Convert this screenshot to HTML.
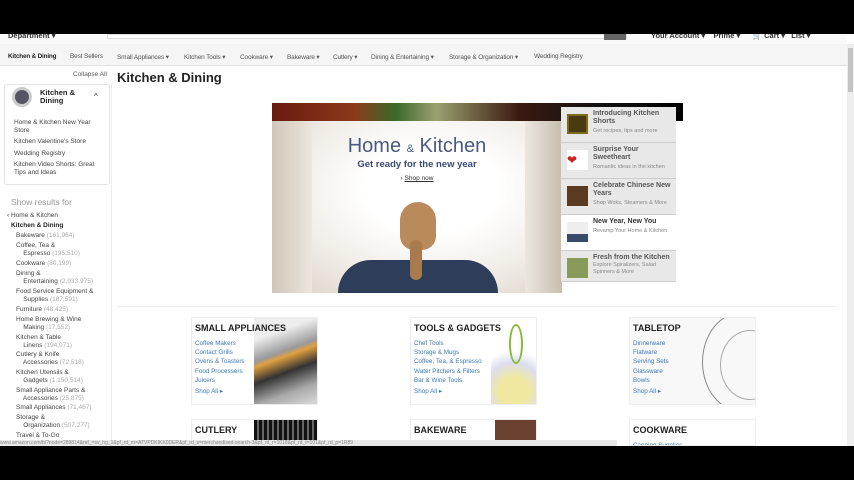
<!DOCTYPE html>
<html><head><meta charset="utf-8"><style>
*{margin:0;padding:0;box-sizing:border-box}
html,body{width:854px;height:480px;overflow:hidden}
body{background:#fff;font-family:"Liberation Sans",sans-serif;position:relative;color:#333}
.a{position:absolute}
.blk{background:#000}
.nav span{position:absolute;top:53px;font-size:6.5px;color:#555;white-space:nowrap;letter-spacing:-0.15px}
.side div{position:absolute;font-size:6.5px;color:#444;line-height:8px;white-space:nowrap}
.side .n{color:#aaa}
.card{position:absolute;width:127px;height:88px;border:1px solid #eee;background:#fff;overflow:hidden}
.card h3{position:absolute;left:3px;top:5px;font-size:9px;font-weight:bold;color:#222}
.card .l{position:absolute;left:3px;top:21px;font-size:6.3px;color:#3a7ab8;line-height:9.2px}
.card .s{position:absolute;left:3px;top:70px;font-size:6.3px;color:#3a7ab8}
.pn{position:absolute;left:561px;width:115px;height:36px;background:#e8e8e8;border-bottom:1px solid #ccc}
.pn .ic{position:absolute;left:6px;top:7px;width:21px;height:20px}
.pn b{position:absolute;left:32px;top:3px;font-size:7px;color:#555;line-height:7.5px;width:82px}
.pn i{position:absolute;left:32px;font-style:normal;font-size:5.5px;color:#888;line-height:6.5px;width:82px}
</style></head><body>
<div class="a" style="left:0;top:34px;width:847px;height:10px;background:#fafafa"></div>
<div class="a" style="left:8px;top:31px;font-size:7.5px;font-weight:bold;color:#333">Department ▾</div>
<div class="a" style="left:107px;top:34px;width:520px;height:5px;background:#fff;border:1px solid #ddd"></div>
<div class="a" style="left:604px;top:34px;width:22px;height:6px;background:#666"></div>
<div class="a" style="left:651px;top:31px;font-size:7.5px;font-weight:bold;color:#333;white-space:nowrap">Your Account ▾ &nbsp; &nbsp;Prime ▾ &nbsp; &nbsp; &nbsp;🛒 Cart ▾ &nbsp; List ▾</div>
<div class="a" style="left:0;top:44px;width:847px;height:22px;background:#f5f5f5;border-bottom:1px solid #e0e0e0"></div>
<div class="nav">
<span style="left:8px;color:#222;font-weight:bold;font-size:6.3px">Kitchen &amp; Dining</span>
<span style="left:70px">Best Sellers</span>
<span style="left:117px">Small Appliances ▾</span>
<span style="left:184px">Kitchen Tools ▾</span>
<span style="left:240px">Cookware ▾</span>
<span style="left:287px">Bakeware ▾</span>
<span style="left:333px">Cutlery ▾</span>
<span style="left:371px">Dining &amp; Entertaining ▾</span>
<span style="left:449px">Storage &amp; Organization ▾</span>
<span style="left:534px">Wedding Registry</span>
</div>
<div class="a" style="left:847px;top:44px;width:7px;height:402px;background:#eee"></div>
<div class="a" style="left:848px;top:48px;width:5px;height:44px;background:#c4c4c4"></div>
<div class="a" style="left:73px;top:71px;font-size:6.5px;color:#555">Collapse All</div>
<div class="a" style="left:117px;top:70px;font-size:13px;font-weight:bold;color:#222">Kitchen &amp; Dining</div>
<div class="a" style="left:4px;top:84px;width:106px;height:101px;border:1px solid #e4e4e4;border-radius:3px"></div>
<div class="a" style="left:12px;top:87px;width:20px;height:20px;border-radius:50%;background:#556;border:3px solid #ccc"></div>
<div class="a" style="left:40px;top:89px;font-size:7.5px;font-weight:bold;color:#222;line-height:8px">Kitchen &amp;<br>Dining</div>
<div class="a" style="left:94px;top:92px;font-size:8px;color:#333">^</div>
<div class="side">
<div style="left:14px;top:119px">Home &amp; Kitchen New Year<br>Store</div>
<div style="left:14px;top:138px">Kitchen Valentine's Store</div>
<div style="left:14px;top:150px">Wedding Registry</div>
<div style="left:14px;top:161px">Kitchen Video Shorts: Great<br>Tips and Ideas</div>
<div style="left:11px;top:197px;font-size:8.5px;color:#999;line-height:10px">Show results for</div>
<div style="left:7px;top:212px">‹ Home &amp; Kitchen</div>
<div style="left:11px;top:222px;font-weight:bold;color:#222">Kitchen &amp; Dining</div>
<div style="left:16px;top:232px">Bakeware <span class="n">(161,964)</span></div>
<div style="left:16px;top:242px">Coffee, Tea &amp;<br>&nbsp; &nbsp; Espresso <span class="n">(195,510)</span></div>
<div style="left:16px;top:260px">Cookware <span class="n">(80,199)</span></div>
<div style="left:16px;top:270px">Dining &amp;<br>&nbsp; &nbsp; Entertaining <span class="n">(2,933,975)</span></div>
<div style="left:16px;top:288px">Food Service Equipment &amp;<br>&nbsp; &nbsp; Supplies <span class="n">(187,591)</span></div>
<div style="left:16px;top:306px">Furniture <span class="n">(48,425)</span></div>
<div style="left:16px;top:316px">Home Brewing &amp; Wine<br>&nbsp; &nbsp; Making <span class="n">(17,552)</span></div>
<div style="left:16px;top:334px">Kitchen &amp; Table<br>&nbsp; &nbsp; Linens <span class="n">(194,071)</span></div>
<div style="left:16px;top:351px">Cutlery &amp; Knife<br>&nbsp; &nbsp; Accessories <span class="n">(72,518)</span></div>
<div style="left:16px;top:369px">Kitchen Utensils &amp;<br>&nbsp; &nbsp; Gadgets <span class="n">(1,150,514)</span></div>
<div style="left:16px;top:387px">Small Appliance Parts &amp;<br>&nbsp; &nbsp; Accessories <span class="n">(25,875)</span></div>
<div style="left:16px;top:404px">Small Appliances <span class="n">(71,467)</span></div>
<div style="left:16px;top:414px">Storage &amp;<br>&nbsp; &nbsp; Organization <span class="n">(507,277)</span></div>
<div style="left:16px;top:432px">Travel &amp; To-Go</div>
</div>
<div class="a" style="left:111px;top:84px;width:1px;height:360px;background:#eee"></div>
<!-- hero -->
<div class="a" style="left:272px;top:103px;width:411px;height:18px;background:linear-gradient(90deg,#6a1a10,#8a3a1a 20%,#3a6a2a 30%,#9aa070 40%,#3a1a10 60%,#111 80%,#000)"></div>
<div class="a" style="left:272px;top:121px;width:290px;height:172px;background:radial-gradient(ellipse at 55% 40%,#fff 30%,#f2eee8 60%,#d8d0c4 100%)"></div>
<div class="a" style="left:272px;top:121px;width:40px;height:172px;background:linear-gradient(90deg,#d0c6b8,#ece6de)"></div>
<div class="a" style="left:525px;top:121px;width:37px;height:172px;background:linear-gradient(90deg,#ece6de,#c8beb0)"></div>
<div class="a" style="left:338px;top:260px;width:160px;height:33px;background:#2e3e5a;border-radius:40px 40px 0 0"></div>
<div class="a" style="left:400px;top:202px;width:36px;height:48px;background:#b88a5c;border-radius:18px 18px 14px 14px"></div>
<div class="a" style="left:410px;top:240px;width:12px;height:40px;background:#a87a4c;border-radius:6px"></div>
<div class="a" style="left:272px;top:135px;width:290px;text-align:center;font-size:20px;color:#4a5a80;font-weight:300">Home <span style="font-size:11px">&amp;</span> Kitchen</div>
<div class="a" style="left:272px;top:159px;width:290px;text-align:center;font-size:9.5px;color:#3a4a78;font-weight:bold">Get ready for the new year</div>
<div class="a" style="left:272px;top:175px;width:290px;text-align:center;font-size:6.5px;color:#333">› <u>Shop now</u></div>
<div class="pn" style="top:107px"><div class="ic" style="background:#4a3a10;border:2px solid #7a6a20"></div><b>Introducing Kitchen Shorts</b><i style="top:21px">Get recipes, tips and more</i></div>
<div class="pn" style="top:143px"><div class="ic" style="background:#fff;color:#c22;font-size:12px;line-height:20px">❤</div><b>Surprise Your Sweetheart</b><i style="top:21px">Romantic ideas in the kitchen</i></div>
<div class="pn" style="top:179px"><div class="ic" style="background:#5a3a20"></div><b>Celebrate Chinese New Years</b><i style="top:21px">Shop Woks, Steamers &amp; More</i></div>
<div class="pn" style="top:215px;background:#fff"><div class="ic" style="background:linear-gradient(#eee 60%,#3a4a6a 60%)"></div><b style="color:#333">New Year, New You</b><i style="top:13px">Revamp Your Home &amp; Kitchen</i></div>
<div class="pn" style="top:251px;height:31px"><div class="ic" style="background:#8a9a5a"></div><b>Fresh from the Kitchen</b><i style="top:11px">Explore Spiralizers, Salad Spinners &amp; More</i></div>
<div class="a" style="left:117px;top:306px;width:720px;height:1px;background:#eee"></div>
<!-- cards -->
<div class="card" style="left:191px;top:317px"><div class="a" style="left:62px;top:0;width:64px;height:87px;background:linear-gradient(160deg,#eee 20%,#999 40%,#e0a040 45%,#333 60%,#aaa 80%,#ddd)"></div><h3>SMALL APPLIANCES</h3><div class="l">Coffee Makers<br>Contact Grills<br>Ovens &amp; Toasters<br>Food Processers<br>Juicers</div><div class="s">Shop All ▸</div></div>
<div class="card" style="left:410px;top:317px"><div class="a" style="left:80px;top:20px;width:46px;height:67px;background:radial-gradient(circle at 50% 80%,#f0e8a0 25%,#dde 50%,#fff 70%)"></div><div class="a" style="left:98px;top:6px;width:14px;height:40px;border:2px solid #8ab838;border-radius:50%"></div><h3>TOOLS &amp; GADGETS</h3><div class="l">Chef Tools<br>Storage &amp; Mugs<br>Coffee, Tea, &amp; Espresso<br>Water Pitchers &amp; Filters<br>Bar &amp; Wine Tools</div><div class="s">Shop All ▸</div></div>
<div class="card" style="left:629px;top:317px;background:#f8f8f8"><div class="a" style="left:72px;top:-6px;width:80px;height:100px;border:1.5px solid #888;border-radius:50%"></div><div class="a" style="left:90px;top:12px;width:60px;height:70px;border:1px solid #aaa;border-radius:50%"></div><h3>TABLETOP</h3><div class="l">Dinnerware<br>Flatware<br>Serving Sets<br>Glassware<br>Bowls</div><div class="s">Shop All ▸</div></div>
<div class="card" style="left:191px;top:419px;height:27px"><div class="a" style="left:62px;top:0;width:64px;height:25px;background:repeating-linear-gradient(90deg,#111 0 3px,#666 3px 5px)"></div><h3>CUTLERY</h3></div>
<div class="card" style="left:410px;top:419px;height:27px"><div class="a" style="left:84px;top:0;width:42px;height:25px;background:#6a4030"></div><h3>BAKEWARE</h3></div>
<div class="card" style="left:629px;top:419px;height:27px"><h3>COOKWARE</h3><div class="l" style="top:21px">Canning Supplies</div></div>
<div class="a" style="left:0;top:440px;width:617px;height:6px;background:#e8e8e8;font-size:5px;color:#888;overflow:hidden;white-space:nowrap;line-height:6px">www.amazon.com/b/?node=289814&amp;ref_=sv_hg_1&amp;pf_rd_m=ATVPDKIKX0DER&amp;pf_rd_s=merchandised-search-3&amp;pf_rd_r=1018&amp;pf_rd_t=101&amp;pf_rd_p=1R89</div>
<div class="a blk" style="left:0;top:0;width:854px;height:34px"></div>
<div class="a blk" style="left:0;top:446px;width:854px;height:34px"></div>
</body></html>
